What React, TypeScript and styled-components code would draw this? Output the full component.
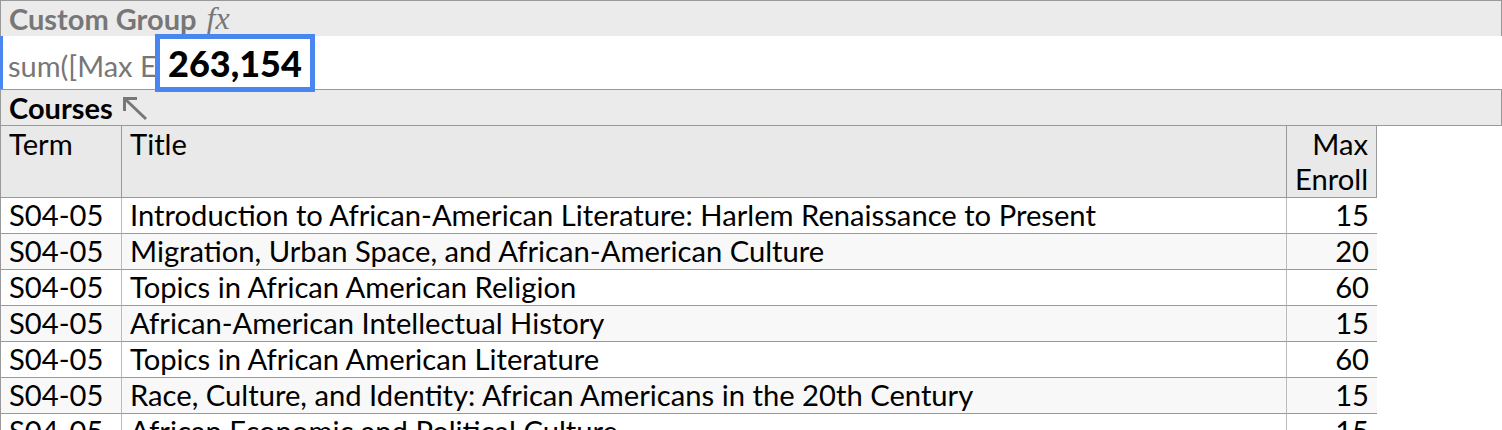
import React from "react";
import styled, { createGlobalStyle } from "styled-components";

const Global = createGlobalStyle`
  html, body { margin: 0; padding: 0; background: #fff; }
  body { font-family: Lato, "Noto Sans", sans-serif; }
  * { box-sizing: border-box; }
`;

const Page = styled.div`
  width: 1502px;
  display: flex;
  flex-direction: column;
`;

const Bar = styled.div<{ $muted?: boolean }>`
  height: 37px;
  background: #ebebeb;
  border: 1px solid #999;
  display: flex;
  align-items: center;
  gap: 8px;
  padding-left: 8px;
  padding-bottom: 1px;
  font-weight: 700;
  font-size: 29px;
  color: ${(p) => (p.$muted ? "#777" : "#000")};
  line-height: 1;
`;

const Fx = styled.span`
  font-family: "Liberation Serif", "DejaVu Serif", serif;
  font-style: italic;
  font-weight: 400;
  font-size: 32px;
  color: #777;
  margin-left: 2px;
`;

const FormulaRow = styled.div`
  height: 53px;
  margin-top: -1px;
  display: flex;
  align-items: stretch;
  border-left: 3px solid #4a86f0;
  background: #fff;
  position: relative;
`;

const FormulaText = styled.div`
  width: 152px;
  padding-left: 5px;
  font-size: 29px;
  color: #777;
  display: flex;
  align-items: flex-end;
  padding-bottom: 6px;
  overflow: hidden;
  white-space: nowrap;
  background: #fff;
`;

const ValueBox = styled.div`
  position: absolute;
  left: 152px;
  top: -2px;
  width: 160px;
  height: 58px;
  border: 5px solid #4a86f0;
  background: #fff;
  font-size: 36px;
  font-weight: 900;
  color: #000;
  display: flex;
  align-items: center;
  padding-left: 8px;
`;

const Table = styled.div`
  display: grid;
  grid-template-columns: 121px 1165px 91px;
  width: 1378px;
`;

const HeadCell = styled.div<{ $right?: boolean }>`
  background: #e9e9e9;
  height: 72px;
  border-left: 1px solid #999;
  border-bottom: 1px solid #999;
  border-right: ${(p) => (p.$right ? "1px solid #999" : "none")};
  font-size: 29.2px;
  line-height: 35px;
  padding: 0 8px;
  text-align: ${(p) => (p.$right ? "right" : "left")};
  color: #000;
`;

const Cell = styled.div<{ $right?: boolean; $alt?: boolean; $first?: boolean }>`
  background: ${(p) => (p.$alt ? "#f8f8f8" : "#fff")};
  height: 36px;
  border-left: 1px solid ${(p) => (p.$first ? "#999" : "#bbb")};
  border-bottom: 1px solid #999;
  font-size: 29.2px;
  line-height: 34px;
  padding: 0 8px;
  text-align: ${(p) => (p.$right ? "right" : "left")};
  white-space: nowrap;
  overflow: hidden;
  color: #000;
`;

const Arrow = () => (
  <svg width="28" height="26" viewBox="0 0 28 26" style={{ marginTop: 2 }}>
    <g stroke="#777" strokeWidth="3" fill="none" strokeLinecap="butt">
      <line x1="3" y1="3" x2="25" y2="24" />
      <line x1="2" y1="3.5" x2="16" y2="3.5" />
      <line x1="3.5" y1="2" x2="3.5" y2="16" />
    </g>
  </svg>
);

const rows: [string, string, number][] = [
  ["S04-05", "Introduction to African-American Literature: Harlem Renaissance to Present", 15],
  ["S04-05", "Migration, Urban Space, and African-American Culture", 20],
  ["S04-05", "Topics in African American Religion", 60],
  ["S04-05", "African-American Intellectual History", 15],
  ["S04-05", "Topics in African American Literature", 60],
  ["S04-05", "Race, Culture, and Identity: African Americans in the 20th Century", 15],
  ["S04-05", "African Economic and Political Culture", 15],
];

export default function App() {
  return (
    <Page>
      <Global />
      <Bar $muted>
        Custom Group<Fx>fx</Fx>
      </Bar>
      <FormulaRow>
        <FormulaText>sum([Max Enroll])</FormulaText>
        <ValueBox>263,154</ValueBox>
      </FormulaRow>
      <Bar>
        Courses
        <Arrow />
      </Bar>
      <Table>
        <HeadCell>Term</HeadCell>
        <HeadCell>Title</HeadCell>
        <HeadCell $right>
          Max
          <br />
          Enroll
        </HeadCell>
        {rows.map(([t, title, n], i) => (
          <React.Fragment key={i}>
            <Cell $first $alt={i % 2 === 1}>{t}</Cell>
            <Cell $alt={i % 2 === 1}>{title}</Cell>
            <Cell $right $alt={i % 2 === 1}>{n}</Cell>
          </React.Fragment>
        ))}
      </Table>
    </Page>
  );
}
